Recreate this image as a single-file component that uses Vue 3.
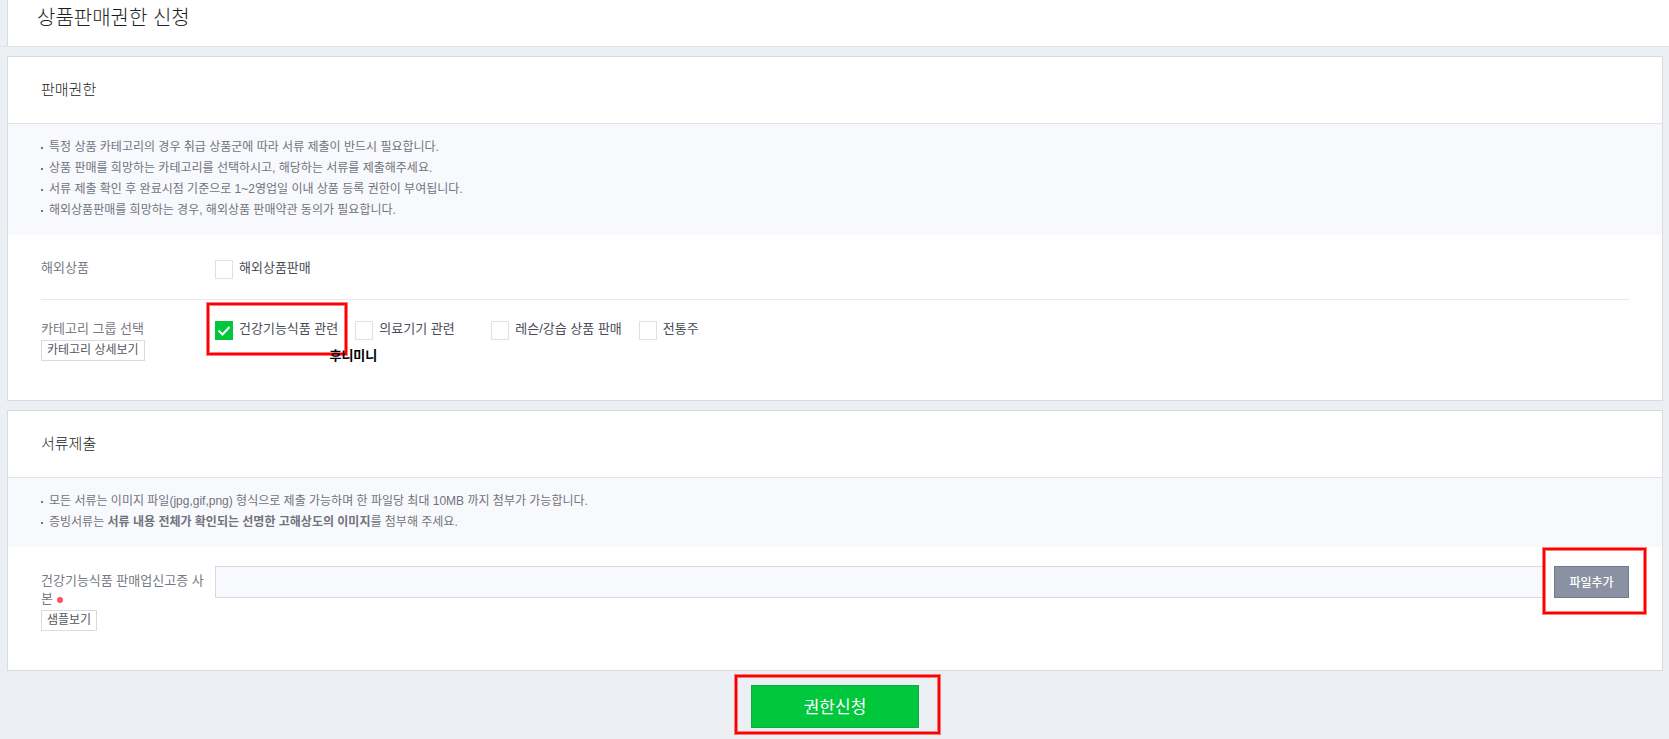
<script setup>
import { ref } from 'vue'

const salesNotes = [
  '특정 상품 카테고리의 경우 취급 상품군에 따라 서류 제출이 반드시 필요합니다.',
  '상품 판매를 희망하는 카테고리를 선택하시고, 해당하는 서류를 제출해주세요.',
  '서류 제출 확인 후 완료시점 기준으로 1~2영업일 이내 상품 등록 권한이 부여됩니다.',
  '해외상품판매를 희망하는 경우, 해외상품 판매약관 동의가 필요합니다.',
]

const overseas = ref(false)
const categories = ref([
  { id: 'health', label: '건강기능식품 관련', checked: true, marked: true },
  { id: 'medical', label: '의료기기 관련', checked: false },
  { id: 'lesson', label: '레슨/강습 상품 판매', checked: false },
  { id: 'liquor', label: '전통주', checked: false },
])
const fileName = ref('')
</script>

<template>
  <div class="page">
    <header class="top">
      <h1>상품판매권한 신청</h1>
    </header>

    <main>
      <section class="card">
        <h2>판매권한</h2>
        <ul class="notes">
          <li v-for="note in salesNotes" :key="note">{{ note }}</li>
        </ul>
        <div class="body">
          <div class="row first">
            <div class="name">해외상품</div>
            <label class="option">
              <input v-model="overseas" type="checkbox" />
              <span>해외상품판매</span>
            </label>
          </div>
          <div class="row second">
            <div class="name">
              <div>카테고리 그룹 선택</div>
              <button type="button" class="small">카테고리 상세보기</button>
            </div>
            <div class="options">
              <div v-for="c in categories" :key="c.id" class="item">
                <label class="option">
                  <input v-model="c.checked" type="checkbox" />
                  <svg v-if="c.checked" class="tick" viewBox="0 0 18 19" aria-hidden="true">
                    <path d="M3.5 9.5 7.5 13.5 14.5 6" fill="none" stroke="#fff" stroke-width="2" />
                  </svg>
                  <span>{{ c.label }}</span>
                </label>
                <template v-if="c.marked">
                  <i class="mark mark-option"></i>
                  <b class="memo">후니미니</b>
                </template>
              </div>
            </div>
          </div>
        </div>
      </section>

      <section class="card">
        <h2>서류제출</h2>
        <ul class="notes">
          <li>모든 서류는 이미지 파일(jpg,gif,png) 형식으로 제출 가능하며 한 파일당 최대 10MB 까지 첨부가 가능합니다.</li>
          <li>증빙서류는 <b>서류 내용 전체가 확인되는 선명한 고해상도의 이미지</b>를 첨부해 주세요.</li>
        </ul>
        <div class="body">
          <div class="row files">
            <div class="name">
              <label for="license">건강기능식품 판매업신고증 사본 <i class="required"></i></label>
              <button type="button" class="small">샘플보기</button>
            </div>
            <div class="upload">
              <input id="license" v-model="fileName" type="text" readonly />
              <div class="add-wrap">
                <button type="button" class="add">파일추가</button>
                <i class="mark mark-add"></i>
              </div>
            </div>
          </div>
        </div>
      </section>

      <div class="submit-wrap">
        <button type="button" class="submit">권한신청</button>
        <i class="mark mark-submit"></i>
      </div>
    </main>
  </div>
</template>

<style>
body {
  margin: 0;
  background: #ecf0f5;
}
</style>

<style scoped>
.page,
.page button,
.page input {
  font-family: "Liberation Sans", "Noto Sans CJK KR", sans-serif;
}
.page {
  box-sizing: border-box;
  min-height: 100vh;
  color: #4a4d57;
  font-size: 13px;
  line-height: 18px;
}
.top {
  padding-left: 7px;
  border-bottom: 1px solid #dfe2e8;
}
h1 {
  margin: 0;
  padding: 3px 29px 13px;
  border-left: 1px solid #d9dbe1;
  background: #fff;
  color: #1c1e22;
  font-size: 20px;
  font-weight: 300;
  line-height: 30px;
}
main {
  padding: 9px 6px 11px 7px;
}
.card {
  margin-bottom: 9px;
  border: 1px solid #d9dbe1;
  background: #fff;
}
h2 {
  margin: 0;
  padding: 22px 33px;
  border-bottom: 1px solid #e0e3e9;
  color: #1c1e22;
  font-size: 15px;
  font-weight: 300;
  line-height: 22px;
}
.notes {
  margin: 0;
  padding: 13px 33px 14px;
  background: #f8f9fd;
  color: #70737c;
  font-size: 12px;
  line-height: 21px;
  list-style: none;
}
.notes li {
  position: relative;
  padding-left: 8px;
}
.notes li::before {
  content: "";
  position: absolute;
  left: 0;
  top: 10px;
  width: 2px;
  height: 2px;
  background: #70737c;
}
.body {
  padding: 0 33px;
}
.row {
  display: grid;
  grid-template-columns: 174px 1fr;
}
.first {
  padding: 24px 0 20px;
  border-bottom: 1px solid #e8e9ec;
}
.second {
  padding: 20px 0 39px;
}
.files {
  padding: 19px 0 39px;
}
.files .name {
  padding: 6px 8px 0 0;
}
.name {
  color: #777a83;
  word-break: break-all;
}
.name label {
  display: block;
}
.required {
  display: inline-block;
  width: 6px;
  height: 6px;
  border-radius: 50%;
  background: #ff5259;
}
.small {
  display: block;
  height: 21px;
  margin: 2px 0 0;
  padding: 0 5px;
  border: 1px solid #d9dbe1;
  background: #fff;
  color: #55575f;
  font-size: 12px;
  line-height: 17px;
}
.options {
  display: flex;
  flex-wrap: wrap;
  align-items: flex-start;
}
.item {
  position: relative;
  box-sizing: border-box;
  min-width: 136px;
  padding-right: 17px;
}
.option {
  position: relative;
  display: flex;
  align-items: flex-start;
  gap: 6px;
}
.option input {
  appearance: none;
  box-sizing: border-box;
  width: 18px;
  height: 19px;
  margin: 1px 0 0;
  border: 1px solid #dfe1e6;
  background: #fff;
}
.option input:checked {
  border-color: #00c73c;
  background: #00c73c;
}
.tick {
  position: absolute;
  left: 0;
  top: 1px;
  width: 18px;
  height: 19px;
  pointer-events: none;
}
.memo {
  position: absolute;
  right: -22px;
  top: 27px;
  color: #000;
}
.upload {
  display: flex;
  gap: 10px;
}
.upload input {
  flex: 1;
  box-sizing: border-box;
  min-width: 0;
  height: 32px;
  margin: 0;
  padding: 0 10px;
  border: 1px solid #d9dbe1;
  border-radius: 0;
  background: #f8f9fd;
  font-size: 13px;
}
.add-wrap {
  position: relative;
  height: 32px;
}
.add {
  width: 75px;
  height: 32px;
  padding: 0 0 2px;
  border: 1px solid #72798f;
  background: #8a91a3;
  color: #fff;
  font-size: 12px;
  font-weight: 500;
}
.submit-wrap {
  position: relative;
  width: 168px;
  margin: 14px auto 0;
}
.submit {
  display: block;
  width: 100%;
  height: 43px;
  padding: 0 0 2px;
  border: 1px solid #0aae3b;
  background: #00c73c;
  color: #fff;
  font-size: 17px;
}
.mark {
  position: absolute;
  border: 2px solid #f00;
  box-shadow: 0 0 0 1px rgba(255, 0, 0, 0.5), inset 0 0 0 1px rgba(255, 0, 0, 0.5);
  pointer-events: none;
}
.mark-option {
  inset: -17px 8px -15px -8px;
}
.mark-add {
  inset: -18px -17px -16px -11px;
}
.mark-submit {
  inset: -10px -21px -6px -16px;
}
</style>
